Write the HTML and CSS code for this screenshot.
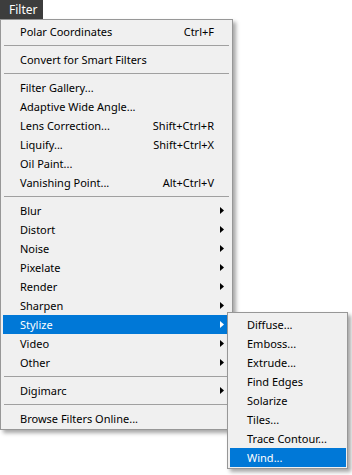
FILE: index.html
```html
<!DOCTYPE html>
<html lang="en">
<head>
    <meta charset="UTF-8">
    <meta name="viewport" content="width=device-width, initial-scale=1.0">
    <title>Filter Menu</title>
    <link rel="stylesheet" href="styles.css">
</head>
<body>
    <div class="menubar">
        <div class="menubar-tab">Filter</div>
    </div>

    <!-- Filter dropdown -->
    <div class="menu main-menu">
        <div class="item"><span class="label">Polar Coordinates</span><span class="shortcut">Ctrl+F</span></div>
        <div class="sep"></div>
        <div class="item"><span class="label">Convert for Smart Filters</span></div>
        <div class="sep"></div>
        <div class="item"><span class="label">Filter Gallery...</span></div>
        <div class="item"><span class="label">Adaptive Wide Angle...</span></div>
        <div class="item"><span class="label">Lens Correction...</span><span class="shortcut">Shift+Ctrl+R</span></div>
        <div class="item"><span class="label">Liquify...</span><span class="shortcut">Shift+Ctrl+X</span></div>
        <div class="item"><span class="label">Oil Paint...</span></div>
        <div class="item"><span class="label">Vanishing Point...</span><span class="shortcut">Alt+Ctrl+V</span></div>
        <div class="sep"></div>
        <div class="item has-sub"><span class="label">Blur</span><svg class="arrow" width="4" height="7" viewBox="0 0 4 7"><path d="M0 0L4 3.5L0 7z"/></svg></div>
        <div class="item has-sub"><span class="label">Distort</span><svg class="arrow" width="4" height="7" viewBox="0 0 4 7"><path d="M0 0L4 3.5L0 7z"/></svg></div>
        <div class="item has-sub"><span class="label">Noise</span><svg class="arrow" width="4" height="7" viewBox="0 0 4 7"><path d="M0 0L4 3.5L0 7z"/></svg></div>
        <div class="item has-sub"><span class="label">Pixelate</span><svg class="arrow" width="4" height="7" viewBox="0 0 4 7"><path d="M0 0L4 3.5L0 7z"/></svg></div>
        <div class="item has-sub"><span class="label">Render</span><svg class="arrow" width="4" height="7" viewBox="0 0 4 7"><path d="M0 0L4 3.5L0 7z"/></svg></div>
        <div class="item has-sub"><span class="label">Sharpen</span><svg class="arrow" width="4" height="7" viewBox="0 0 4 7"><path d="M0 0L4 3.5L0 7z"/></svg></div>
        <div class="item has-sub active"><span class="label">Stylize</span><svg class="arrow" width="4" height="7" viewBox="0 0 4 7"><path d="M0 0L4 3.5L0 7z"/></svg></div>
        <div class="item has-sub"><span class="label">Video</span><svg class="arrow" width="4" height="7" viewBox="0 0 4 7"><path d="M0 0L4 3.5L0 7z"/></svg></div>
        <div class="item has-sub"><span class="label">Other</span><svg class="arrow" width="4" height="7" viewBox="0 0 4 7"><path d="M0 0L4 3.5L0 7z"/></svg></div>
        <div class="sep"></div>
        <div class="item has-sub"><span class="label">Digimarc</span><svg class="arrow" width="4" height="7" viewBox="0 0 4 7"><path d="M0 0L4 3.5L0 7z"/></svg></div>
        <div class="sep"></div>
        <div class="item"><span class="label">Browse Filters Online...</span></div>
    </div>

    <!-- Stylize submenu, opened over the main menu -->
    <div class="menu sub-menu">
        <div class="item"><span class="label">Diffuse...</span></div>
        <div class="item"><span class="label">Emboss...</span></div>
        <div class="item"><span class="label">Extrude...</span></div>
        <div class="item"><span class="label">Find Edges</span></div>
        <div class="item"><span class="label">Solarize</span></div>
        <div class="item"><span class="label">Tiles...</span></div>
        <div class="item"><span class="label">Trace Contour...</span></div>
        <div class="item active"><span class="label">Wind...</span></div>
    </div>
</body>
</html>
```

FILE: styles.css
```css
body {
    position: relative;
    margin: 0;
    padding: 0;
    min-height: 475px;
    background-color: #ffffff;
    font-family: "Noto Sans", "Open Sans", sans-serif;
    font-size: 11px;
    color: #000000;
}

/* Top menu bar */
.menubar {
    display: flex;
    height: 19px;
}
.menubar-tab {
    width: 43px;
    height: 19px;
    line-height: 19px;
    box-sizing: border-box;
    padding-left: 9px;
    font-size: 12px;
    background-color: #3d3d3d;
    color: #ffffff;
}

/* Dropdown menus */
.menu {
    background-color: #f0f0f0;
    border: 1px solid #979797;
    box-shadow: 3px 3px 4px rgba(0, 0, 0, 0.35);
}
.main-menu {
    width: 233px;
    box-sizing: border-box;
    padding: 2px 2px 1px 2px;
}
.item {
    display: flex;
    align-items: center;
    height: 19px;
    padding: 0 6px 0 17px;
}
.item .label {
    flex: 1;
    white-space: nowrap;
}
.item .shortcut {
    margin-right: 10px;
    white-space: nowrap;
}
.item .arrow {
    fill: #000000;
}
.item.active {
    background-color: #0078d7;
    color: #ffffff;
}
.item.active .arrow {
    fill: #ffffff;
}
.sep {
    height: 1px;
    margin: 4px 1px 4px 1px;
    background-color: #a0a0a0;
}

/* Stylize submenu */
.sub-menu {
    position: absolute;
    left: 227px;
    top: 312px;
    z-index: 1;
    width: 121px;
    box-sizing: border-box;
    padding: 2px 1px 1px 2px;
}
.sub-menu .item {
    padding-left: 17px;
}
```
